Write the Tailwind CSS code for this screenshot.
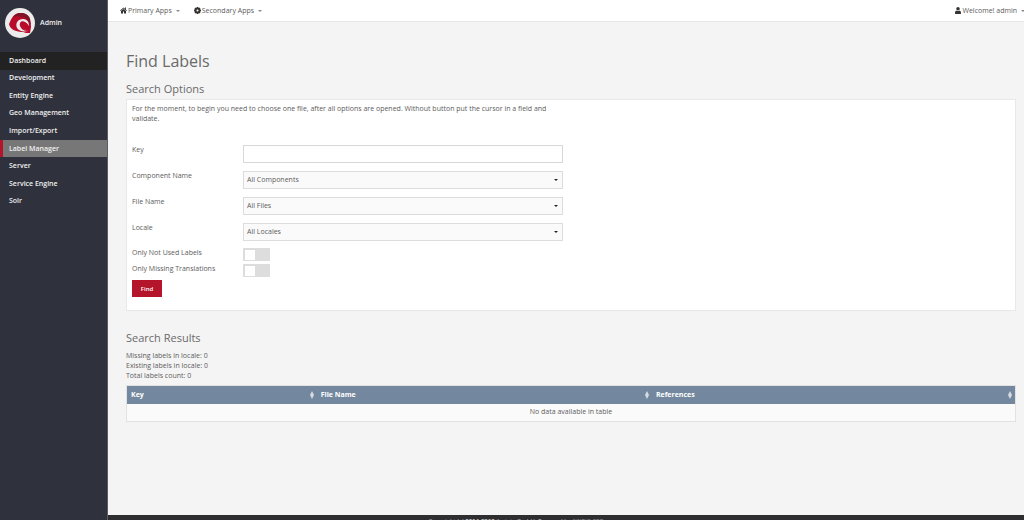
<!DOCTYPE html>
<html lang="en">
<head>
<meta charset="utf-8">
<title>Find Labels</title>
<script src="https://cdn.jsdelivr.net/npm/@tailwindcss/browser@4"></script>
</head>
<body class="flex h-screen overflow-hidden bg-[#f4f4f4] font-['Open_Sans',sans-serif] text-[7px] leading-[10px] text-[#5c5c5c]">
  <aside class="w-[108px] shrink-0 border-r border-[#5b5d66] bg-[#2f323c] font-semibold text-[#f0f0f0]">
    <div class="flex h-[52px] items-center gap-[5px] pl-[5px] pb-[6px]">
      <svg class="size-[30px]" viewBox="0 0 30 30" aria-hidden="true">
        <circle cx="15" cy="15" r="15" fill="#ececec"/>
        <path d="M4 16C6 12 8 5 15 5c5 0 9 2 10 6l1 8-1 6c-3 0-5 0-7-1C12 24 5 22 4 16z" fill="#b90c2b"/>
        <path d="M8 9c3-5 14-6 17 2l1 7c-2-5-4-8-9-9-3-1-6-1-9 0z" fill="#7e1428"/>
        <path d="M12 20c-2-5 1-9 6-9 4 0 6 3 6 7-2-4-6-5-8-2 0 3 3 5 7 7-5 1-9 0-11-3z" fill="#ececec"/>
        <path d="M15 18c-1-4 2-6 5-4 2 1 3 3 3 6-2-3-4-4-6-3 0 2 2 4 6 6-4 0-7-2-8-5z" fill="#b90c2b"/>
      </svg>
      <span>Admin</span>
    </div>
    <nav class="grid h-[158px] auto-rows-fr">
      <a href="#" class="flex items-center bg-[#222222] pl-[9px]">Dashboard</a>
      <a href="#" class="flex items-center pl-[9px]">Development</a>
      <a href="#" class="flex items-center pl-[9px]">Entity Engine</a>
      <a href="#" class="flex items-center pl-[9px]">Geo Management</a>
      <a href="#" class="flex items-center pl-[9px]">Import/Export</a>
      <a href="#" class="flex items-center border-l-3 border-[#b5152b] bg-[#777777] pl-[6px]">Label Manager</a>
      <a href="#" class="flex items-center pl-[9px]">Server</a>
      <a href="#" class="flex items-center pl-[9px]">Service Engine</a>
      <a href="#" class="flex items-center pl-[9px]">Solr</a>
    </nav>
  </aside>
  <div class="flex min-w-0 grow flex-col">
    <header class="flex h-[22px] shrink-0 items-center gap-[14px] border-b border-[#e6e6e6] bg-white pl-3">
      <button class="flex items-center gap-px">
        <svg class="size-[7px]" viewBox="0 0 14 14" fill="#333" aria-hidden="true"><path d="M7 1 14 7l-1 1-6-5-6 5-1-1zM10 1h2v4l-2-2zM7 4l5 4v5H8V9H6v4H2V8z"/></svg>
        <span>Primary Apps</span>
        <svg class="ml-[3px] h-[2px] w-[4px]" viewBox="0 0 4 2" fill="#888" aria-hidden="true"><path d="M0 0h4L2 2z"/></svg>
      </button>
      <button class="flex items-center gap-px">
        <svg class="size-[7px]" viewBox="0 0 14 14" aria-hidden="true"><circle cx="7" cy="7" r="4" fill="none" stroke="#333" stroke-width="4"/><path d="M7 0v3M7 11v3M0 7h3M11 7h3M2 2l2 2M10 10l2 2M12 2l-2 2M4 10l-2 2" stroke="#333" stroke-width="3"/></svg>
        <span>Secondary Apps</span>
        <svg class="ml-[3px] h-[2px] w-[4px]" viewBox="0 0 4 2" fill="#888" aria-hidden="true"><path d="M0 0h4L2 2z"/></svg>
      </button>
      <button class="ml-auto flex items-center gap-px">
        <svg class="h-[7px] w-[6px]" viewBox="0 0 10 12" fill="#333" aria-hidden="true"><circle cx="5" cy="3" r="3"/><path d="M0 12V8l2-2q3 2 6 0l2 2v4z"/></svg>
        <span>Welcome! admin</span>
        <svg class="ml-[3px] h-[2px] w-[3px]" viewBox="0 0 3 2" fill="#888" aria-hidden="true"><path d="M0 0h4L2 2z"/></svg>
      </button>
    </header>
    <main class="grow pr-2 pl-[18px] pt-[28px]">
      <h1 class="text-[16px] leading-[22px] text-[#6a6a6a]">Find Labels</h1>
      <h2 class="mt-[9px] text-[11px] leading-[16px] text-[#6a6a6a]">Search Options</h2>
      <form class="mt-[2px] border border-[#e8e8e8] bg-white px-[5px] pt-[4px] pb-[13px]">
        <p class="w-[420px]">For the moment, to begin you need to choose one file, after all options are opened. Without button put the cursor in a field and validate.</p>
        <div class="mt-[21px] grid grid-cols-[111px_320px] gap-y-2">
          <label for="key">Key</label>
          <input id="key" type="text" class="h-[18px] border border-[#d8d8d8] bg-white px-[4px]">
          <label for="component">Component Name</label>
          <div class="relative">
            <select id="component" class="block h-[18px] w-full appearance-none border border-[#dcdcdc] bg-[#fafafa] px-[3px]"><option>All Components</option></select>
            <svg class="pointer-events-none absolute top-2 right-[5px] h-[2px] w-[4px]" viewBox="0 0 4 2" fill="#222" aria-hidden="true"><path d="M0 0h4L2 2z"/></svg>
          </div>
          <label for="file">File Name</label>
          <div class="relative">
            <select id="file" class="block h-[18px] w-full appearance-none border border-[#dcdcdc] bg-[#fafafa] px-[3px]"><option>All Files</option></select>
            <svg class="pointer-events-none absolute top-2 right-[5px] h-[2px] w-[4px]" viewBox="0 0 4 2" fill="#222" aria-hidden="true"><path d="M0 0h4L2 2z"/></svg>
          </div>
          <label for="locale">Locale</label>
          <div class="relative">
            <select id="locale" class="block h-[18px] w-full appearance-none border border-[#dcdcdc] bg-[#fafafa] px-[3px]"><option>All Locales</option></select>
            <svg class="pointer-events-none absolute top-2 right-[5px] h-[2px] w-[4px]" viewBox="0 0 4 2" fill="#222" aria-hidden="true"><path d="M0 0h4L2 2z"/></svg>
          </div>
        </div>
        <div class="mt-[7px] grid grid-cols-[111px_320px] gap-y-[3px]">
          <label for="unused">Only Not Used Labels</label>
          <input id="unused" type="checkbox" class="flex h-[13px] w-[27px] appearance-none items-center bg-[#dddddd] pl-[2px] before:h-[10px] before:w-[10px] before:bg-white before:content-['']">
          <label for="missing">Only Missing Translations</label>
          <input id="missing" type="checkbox" class="flex h-[13px] w-[27px] appearance-none items-center bg-[#dddddd] pl-[2px] before:h-[10px] before:w-[10px] before:bg-white before:content-['']">
        </div>
        <button type="button" class="mt-[3px] block h-[17px] w-[30px] bg-[#b5152b] text-[6px] font-semibold text-white">Find</button>
      </form>
      <h2 class="mt-[19px] text-[11px] leading-[16px] text-[#6a6a6a]">Search Results</h2>
      <p class="mt-[5px]">Missing labels in locale: 0<br>Existing labels in locale: 0<br>Total labels count: 0</p>
      <table class="mt-[4px] w-full table-fixed border-collapse border border-[#e2e2e2] bg-[#fafafa]">
        <colgroup><col class="w-[21.4%]"><col class="w-[37.7%]"><col></colgroup>
        <thead class="bg-[#73889e] text-left text-white">
          <tr class="h-[18px]">
            <th class="pr-[3px] pl-[4px]"><div class="flex items-center justify-between">Key<svg class="h-[8px] w-[4px]" viewBox="0 0 4 8" fill="#d5dbe1" aria-hidden="true"><path d="M0 4 2 0l2 4zM0 4h4L2 8z"/></svg></div></th>
            <th class="pr-[3px] pl-[4px]"><div class="flex items-center justify-between">File Name<svg class="h-[8px] w-[4px]" viewBox="0 0 4 8" fill="#d5dbe1" aria-hidden="true"><path d="M0 4 2 0l2 4zM0 4h4L2 8z"/></svg></div></th>
            <th class="pr-[3px] pl-[4px]"><div class="flex items-center justify-between">References<svg class="h-[8px] w-[4px]" viewBox="0 0 4 8" fill="#d5dbe1" aria-hidden="true"><path d="M0 4 2 0l2 4zM0 4h4L2 8z"/></svg></div></th>
          </tr>
        </thead>
        <tbody><tr class="h-[18px]"><td colspan="3" class="text-center">No data available in table</td></tr></tbody>
      </table>
    </main>
    <footer class="h-[5px] shrink-0 overflow-hidden bg-[#2e2e30] pt-px pr-[100px] text-center text-[6px] text-[#cccccc]">Copyright (c) <b>2014-2018</b> ilscipio GmbH. Powered by <span class="text-[#999999]">SCIPIO ERP</span></footer>
  </div>
</body>
</html>
